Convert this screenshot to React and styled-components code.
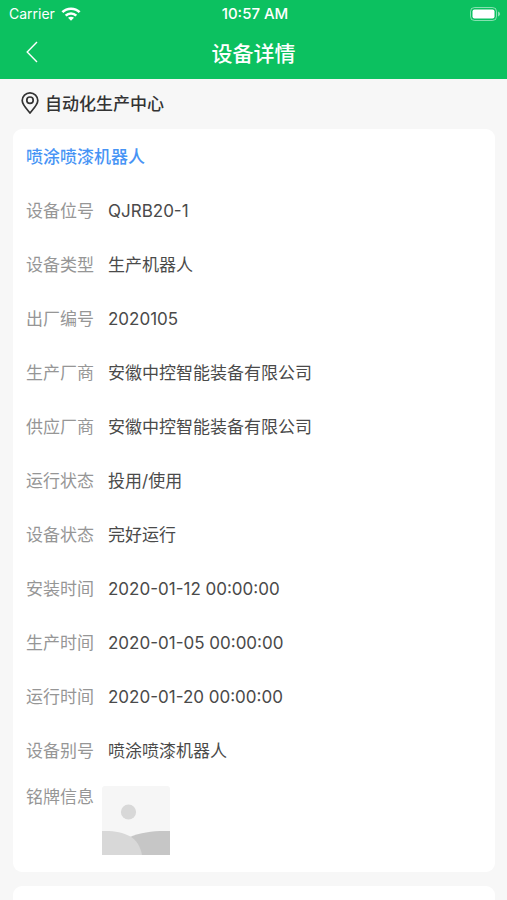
import React from 'react';
import styled, { createGlobalStyle } from 'styled-components';

const FIELDS = [
  { label: '设备位号', value: 'QJRB20-1' },
  { label: '设备类型', value: '生产机器人' },
  { label: '出厂编号', value: '2020105' },
  { label: '生产厂商', value: '安徽中控智能装备有限公司' },
  { label: '供应厂商', value: '安徽中控智能装备有限公司' },
  { label: '运行状态', value: '投用/使用' },
  { label: '设备状态', value: '完好运行' },
  { label: '安装时间', value: '2020-01-12 00:00:00' },
  { label: '生产时间', value: '2020-01-05 00:00:00' },
  { label: '运行时间', value: '2020-01-20 00:00:00' },
  { label: '设备别号', value: '喷涂喷漆机器人' },
];

const GlobalStyle = createGlobalStyle`
  * {
    box-sizing : border-box;
  }

  body {
    margin      : 0;
    background  : #f7f7f7;
    color       : #4a4a4a;
    font-family : Inter, 'Noto Sans CJK SC', sans-serif;
    font-size   : 17px;
  }
`;

const Page = styled.div`
  display        : flex;
  flex-direction : column;
  min-height     : 100vh;
`;

const Header = styled.header`
  background : #0cc160;
  color      : #fff;
`;

const StatusBar = styled.div`
  display               : grid;
  grid-template-columns : 1fr auto 1fr;
  align-items           : center;
  height                : 27px;
  padding               : 0 6px 0 9px;
  font-size             : 14px;
`;

const Carrier = styled.div`
  display     : flex;
  align-items : center;
  gap         : 6px;
`;

const Clock = styled.div`
  font-size   : 15px;
  font-weight : 500;
`;

const Battery = styled.div`
  display         : flex;
  justify-content : flex-end;
`;

const NavBar = styled.div`
  display               : grid;
  grid-template-columns : 64px 1fr 64px;
  align-items           : center;
  height                : 52px;
  padding-bottom        : 2px;
`;

const BackButton = styled.button`
  display         : flex;
  align-items     : center;
  justify-content : center;
  height          : 44px;
  padding         : 0;
  border          : 0;
  background      : transparent;
  cursor          : pointer;
`;

const Title = styled.h1`
  margin      : 0;
  font-size   : 21px;
  font-weight : 500;
  text-align  : center;
`;

const Location = styled.div`
  display        : flex;
  align-items    : center;
  gap            : 6px;
  height         : 50px;
  padding        : 0 21px 3px;
  color          : #333;
  font-weight    : 500;
`;

const Card = styled.section`
  margin        : 0 12px 14px 13px;
  padding       : 1px 13px 17px;
  border-radius : 9px;
  background    : #fff;
`;

const NextCard = styled(Card)`
  flex          : 1;
  margin-bottom : 0;
  padding       : 0;
  border-radius : 9px 9px 0 0;
`;

const DeviceName = styled.h2`
  margin      : 0;
  color       : #4794f5;
  font-size   : 17px;
  font-weight : 500;
  line-height : 54px;
`;

const Fields = styled.dl`
  margin : 0;
`;

const Field = styled.div`
  display     : flex;
  gap         : 14px;
  line-height : 54px;
`;

const PhotoField = styled(Field)`
  gap         : 8px;
  padding-top : 8px;
  line-height : 22px;
`;

const Label = styled.dt`
  color : #969696;
`;

const Value = styled.dd`
  margin : 0;
`;

const Photo = styled.dd`
  display : flex;
  margin  : 0;
`;

const WifiIcon = () => (
  <svg width="20" height="14" viewBox="0 0 20 14" fill="none" stroke="#fff" strokeWidth="2.6" aria-hidden="true">
    <path d="M1.4 5.2C6 0.6 14 0.6 18.6 5.2" />
    <path d="M4.7 8.6C7.6 5.7 12.4 5.7 15.3 8.6" />
    <path d="M10 13.8L7 10.8C8.7 9.3 11.3 9.3 13 10.8Z" fill="#fff" stroke="none" />
  </svg>
);

const BatteryIcon = () => (
  <svg width="31" height="14" viewBox="0 0 31 14" aria-hidden="true">
    <rect x="0.5" y="0.5" width="26" height="13" rx="4" fill="none" stroke="#fff" strokeOpacity="0.5" />
    <rect x="2.5" y="2.5" width="22" height="9" rx="2" fill="#fff" />
    <path d="M28 4.6C30.8 5.4 30.8 8.6 28 9.4Z" fill="#fff" fillOpacity="0.5" />
  </svg>
);

const BackIcon = () => (
  <svg width="12" height="22" viewBox="0 0 12 22" fill="none" stroke="#fff" strokeWidth="1.4" aria-hidden="true">
    <path d="M11 1L1.2 11L11 21" />
  </svg>
);

const PinIcon = () => (
  <svg width="18" height="22" viewBox="0 0 18 22" fill="none" stroke="#333" strokeWidth="1.7" aria-hidden="true">
    <path d="M9 21C6.4 17.8 1.2 12.8 1.2 8.6A7.8 7.7 0 0 1 16.8 8.6C16.8 12.8 11.6 17.8 9 21Z" />
    <circle cx="9" cy="8.2" r="3.2" />
  </svg>
);

const PhotoPlaceholder = () => (
  <svg width="68" height="69" viewBox="0 0 68 69" role="img" aria-label="铭牌信息">
    <rect width="68" height="69" rx="3" fill="#f6f6f6" />
    <circle cx="26.5" cy="26" r="7.6" fill="#d8d8d8" />
    <path d="M28 51C39 46 53 44.5 68 45V69H28Z" fill="#c6c6c6" />
    <path d="M0 45C11 44.5 20 46 28.5 50.5C34.5 54 38.5 61 40 69H0Z" fill="#d8d8d8" />
  </svg>
);

const App = () => (
  <Page>
    <GlobalStyle />
    <Header>
      <StatusBar>
        <Carrier>
          Carrier
          <WifiIcon />
        </Carrier>
        <Clock>10:57 AM</Clock>
        <Battery>
          <BatteryIcon />
        </Battery>
      </StatusBar>
      <NavBar>
        <BackButton type="button" aria-label="返回">
          <BackIcon />
        </BackButton>
        <Title>设备详情</Title>
      </NavBar>
    </Header>
    <Location>
      <PinIcon />
      自动化生产中心
    </Location>
    <Card>
      <DeviceName>喷涂喷漆机器人</DeviceName>
      <Fields>
        {
          FIELDS.map(f =>
            <Field key={f.label}>
              <Label>{f.label}</Label>
              <Value>{f.value}</Value>
            </Field>
          )
        }
        <PhotoField>
          <Label>铭牌信息</Label>
          <Photo>
            <PhotoPlaceholder />
          </Photo>
        </PhotoField>
      </Fields>
    </Card>
    <NextCard />
  </Page>
);

export default App;
